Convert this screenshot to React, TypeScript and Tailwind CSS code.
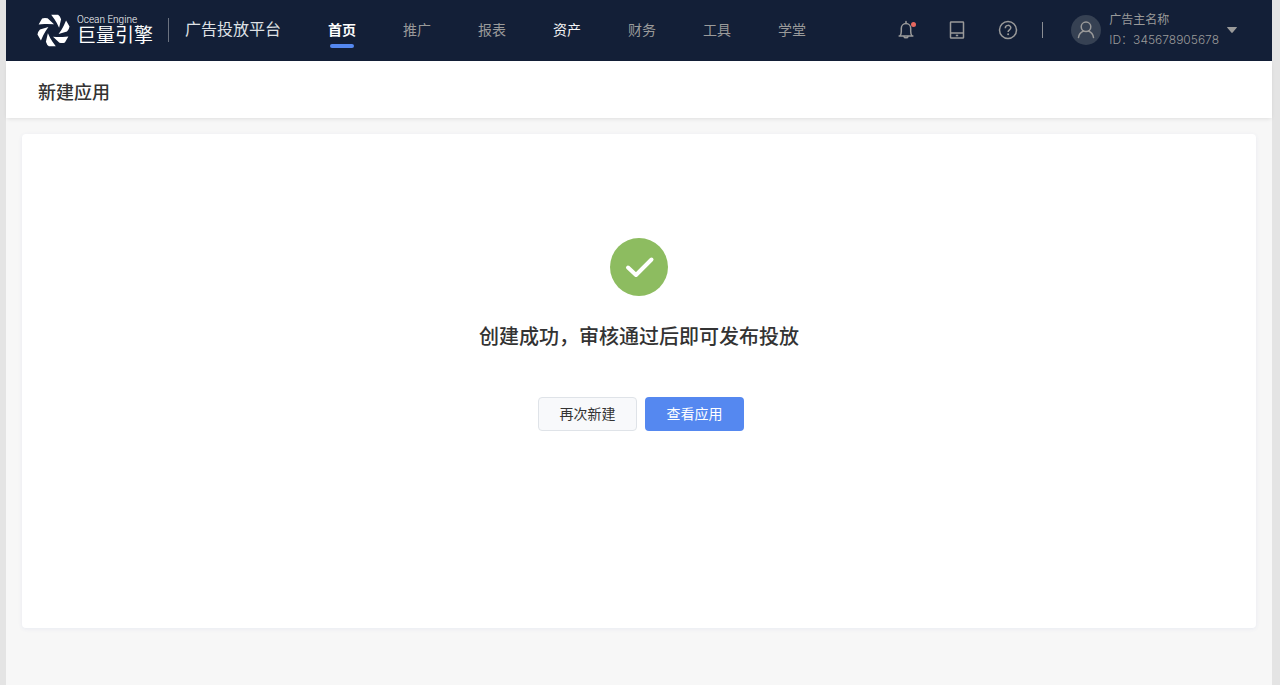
import clsx from "clsx";

type NavItem = {
  label: string;
  active?: boolean;
  highlighted?: boolean;
};

const navItems: NavItem[] = [
  { label: "首页", active: true },
  { label: "推广" },
  { label: "报表" },
  { label: "资产", highlighted: true },
  { label: "财务" },
  { label: "工具" },
  { label: "学堂" },
];

const bladeAngles = [0, 60, 120, 180, 240, 300];

function LogoMark() {
  return (
    <svg viewBox="-50 -50 100 100" className="size-[33px]" fill="#fff" aria-hidden="true">
      {bladeAngles.map((angle) => (
        <path
          key={angle}
          d="M-7 -48 L14 -48 Q20 -44 23 -34 L17 -8 Q10 -24 3 -34 Z"
          transform={`rotate(${angle})`}
        />
      ))}
    </svg>
  );
}

function Logo() {
  return (
    <a href="#" aria-label="巨量引擎" className="flex items-center gap-[7px] text-white">
      <LogoMark />
      <span className="flex flex-col">
        <span className="font-['Roboto'] text-[10px] leading-[12px] font-light">Ocean Engine</span>
        <span className="text-[19px] leading-[20px]">巨量引擎</span>
      </span>
    </a>
  );
}

function BellIcon() {
  return (
    <svg viewBox="0 0 20 20" className="size-5" fill="none" stroke="currentColor" strokeWidth="1.5" aria-hidden="true">
      <path d="M2.6 16h14.8M4 16c1-1.3 1.3-2.5 1.3-4.5V8.3a4.7 4.7 0 0 1 9.400 0v3.200c0 2 .3 3.200 1.300 4.500" />
      <path d="M10 3.500V1.600M8 16.500c.3 1.700 3.700 1.700 4 0" strokeLinecap="round" />
    </svg>
  );
}

function DeviceIcon() {
  return (
    <svg viewBox="0 0 20 20" className="size-5" fill="none" stroke="currentColor" strokeWidth="1.5" aria-hidden="true">
      <rect x="3.5" y="1.9" width="13" height="16.2" rx=".6" />
      <path d="M3.5 13h13" />
      <path d="M8.8 15.500h2.400" strokeWidth="1.6" />
    </svg>
  );
}

function HelpIcon() {
  return (
    <svg viewBox="0 0 20 20" className="size-5" fill="none" stroke="currentColor" strokeWidth="1.5" aria-hidden="true">
      <circle cx="10" cy="10" r="8.500" />
      <path d="M7.300 8.200c0-3.800 5.500-3.600 5.500-.4 0 2-2.700 2-2.700 4.200" />
      <circle cx="10.1" cy="14.2" r="1" fill="currentColor" stroke="none" />
    </svg>
  );
}

function Header() {
  return (
    <header className="flex h-[61px] items-center bg-[#131f37] pb-px pl-[31px] pr-[35px] text-[#9a9a9a]">
      <Logo />
      <div className="ml-[15px] mr-4 h-6 w-px bg-[#6b7280]" />
      <span className="text-base text-[#dfe1e5]">广告投放平台</span>
      <nav className="ml-[47px] flex gap-[47px] text-sm">
        {navItems.map((item) => (
          <a
            key={item.label}
            href="#"
            aria-current={item.active ? "page" : undefined}
            className={clsx(
              "relative leading-5",
              item.active && "font-bold text-white",
              item.highlighted && "text-[#f3f4f6]"
            )}
          >
            {item.label}
            {item.active && (
              <span className="absolute inset-x-0.5 top-6 h-1 rounded-full bg-[#5588f0]" />
            )}
          </a>
        ))}
      </nav>
      <div className="ml-auto flex items-center gap-[31px]">
        <button type="button" aria-label="通知" className="relative">
          <BellIcon />
          <span className="absolute right-0 top-0.5 size-[5px] rounded-full bg-[#e8685f]" />
        </button>
        <button type="button" aria-label="设备">
          <DeviceIcon />
        </button>
        <button type="button" aria-label="帮助">
          <HelpIcon />
        </button>
      </div>
      <div className="ml-6 mr-7 h-4 w-px bg-[#8b8e94]" />
      <button type="button" className="flex items-center text-left">
        <span className="flex size-[30px] items-center justify-center rounded-full bg-[#364153]">
          <svg viewBox="0 0 20 20" className="size-5" fill="none" stroke="currentColor" strokeWidth="1.5" aria-hidden="true">
            <circle cx="10" cy="6.8" r="4.8" />
            <path d="M2.500 17.500c.5-3.500 2.500-5.500 5-6.400M17.500 17.500c-.5-3.500-2.500-5.500-5-6.400" strokeLinecap="round" />
          </svg>
        </span>
        <span className="ml-2 mr-2 flex flex-col text-xs leading-5">
          <span>广告主名称</span>
          <span className="font-['Inter','Noto_Sans_CJK_SC',sans-serif] font-light">ID：345678905678</span>
        </span>
        <svg viewBox="0 0 10 6" className="h-1.5 w-2.5" fill="currentColor" aria-hidden="true">
          <path d="M.5 0h9q.8 0 .2.700L5.700 5.600q-.7.700-1.400 0L.3.700Q-.3 0 .5 0Z" />
        </svg>
      </button>
    </header>
  );
}

export default function App() {
  return (
    <div className="min-h-screen bg-[#e4e4e4] pl-1.5 pr-2 font-['Liberation_Sans','Noto_Sans_CJK_SC',sans-serif]">
      <div className="flex min-h-screen flex-col bg-[#f7f7f7]">
        <Header />
        <div className="flex h-[57px] items-center bg-white px-8 pt-1.5 shadow-[0_2px_4px_-1px_rgba(0,0,0,0.1)]">
          <h1 className="text-lg font-medium text-[#333]">新建应用</h1>
        </div>
        <main className="mx-4 mt-4 flex min-h-[494px] flex-col items-center rounded bg-white pt-[104px] shadow-[0_1px_4px_rgba(60,90,180,0.08)]">
          <svg viewBox="0 0 58 58" className="size-[58px]" aria-hidden="true">
            <circle cx="29" cy="29" r="29" fill="#8dbc60" />
            <path
              d="M18 29.500l8 7.500L41.500 21.500"
              fill="none"
              stroke="#fff"
              strokeWidth="4"
              strokeLinecap="round"
              strokeLinejoin="round"
            />
          </svg>
          <h2 className="mt-[27px] text-xl font-medium text-[#333]">创建成功，审核通过后即可发布投放</h2>
          <div className="mt-[46px] flex gap-2 pl-1 text-sm">
            <button type="button" className="h-[34px] w-[99px] rounded border border-[#dfe3e8] bg-[#f8f9fb] text-[#333]">
              再次新建
            </button>
            <button type="button" className="h-[34px] w-[99px] rounded bg-[#5588f0] text-white">
              查看应用
            </button>
          </div>
        </main>
      </div>
    </div>
  );
}
